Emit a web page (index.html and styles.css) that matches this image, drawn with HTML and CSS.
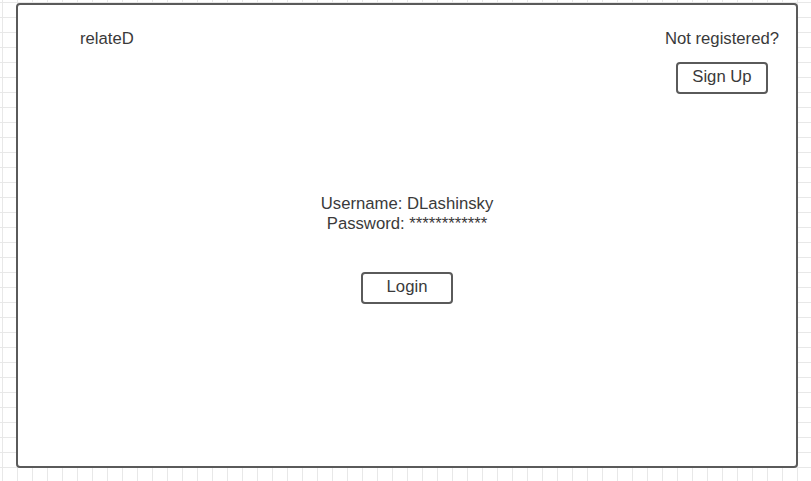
FILE: index.html
```html
<!DOCTYPE html>
<html>
<head>
<meta charset="utf-8">
<link rel="stylesheet" href="styles.css">
</head>
<body>
<div class="frame">
  <div class="header">
    <div class="logo">relateD</div>
    <div class="signup">
      <div class="note">Not registered?</div>
      <div class="btn">Sign Up</div>
    </div>
  </div>
  <div class="login">
    <div class="creds">
      <div class="line">Username: DLashinsky</div>
      <div class="line">Password: ************</div>
    </div>
    <div class="btn">Login</div>
  </div>
</div>
</body>
</html>
```
FILE: styles.css
```css
html, body {
  margin: 0;
  padding: 0;
}
body {
  width: 811px;
  height: 481px;
  overflow: hidden;
  background-color: #ffffff;
  background-image:
    linear-gradient(to right, #e8e8e8 1px, transparent 1px),
    linear-gradient(to bottom, #e8e8e8 1px, transparent 1px);
  background-size: 15px 15px;
  background-position: 2px 2px;
  font-family: "Liberation Sans", Arial, sans-serif;
  font-size: 16.7px;
  color: #3a3a3a;
  padding-top: 3px;
  box-sizing: border-box;
}
.frame {
  margin-left: 16px;
  width: 782px;
  height: 465px;
  box-sizing: border-box;
  border: 2px solid #5a5a5a;
  border-radius: 4px;
  background: #ffffff;
  display: flex;
  flex-direction: column;
}
.header {
  display: flex;
  justify-content: space-between;
  align-items: flex-start;
  padding: 24px 17px 0 62px;
}
.logo {
  line-height: 20px;
}
.signup {
  display: flex;
  flex-direction: column;
  align-items: center;
}
.note {
  line-height: 20px;
}
.btn {
  width: 92px;
  height: 32px;
  box-sizing: border-box;
  border: 2px solid #5a5a5a;
  border-radius: 4px;
  display: flex;
  justify-content: center;
  line-height: 24px;
  padding-top: 1px;
}
.signup .btn {
  margin-top: 13px;
}
.login {
  display: flex;
  flex-direction: column;
  align-items: center;
  margin-top: 100px;
}
.creds {
  text-align: center;
}
.line {
  line-height: 20px;
}
.login .btn {
  margin-top: 38px;
}
```
